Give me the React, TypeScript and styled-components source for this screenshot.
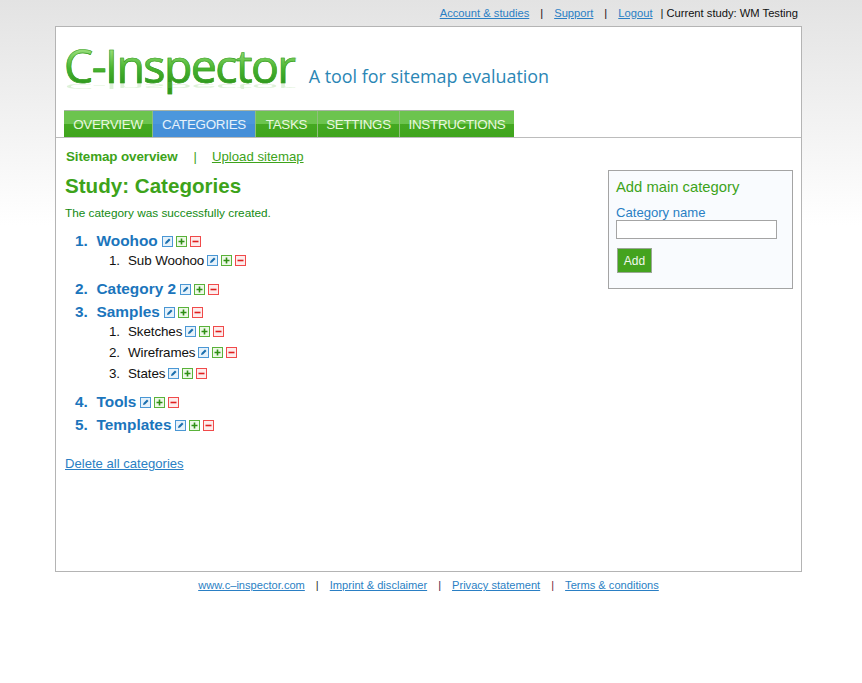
import React from "react";
import styled, { createGlobalStyle } from "styled-components";

const Global = createGlobalStyle`
  html, body { margin: 0; padding: 0; background: #fff; }
  body {
    min-height: 683px;
    font-family: "Liberation Sans", Arial, sans-serif;
    background: linear-gradient(#e3e3e3 0, #ffffff 225px) no-repeat;
  }
`;

const Page = styled.div`
  width: 862px;
  height: 683px;
  box-sizing: border-box;
  padding-left: 55px;
  overflow: hidden;
  display: flex;
  flex-direction: column;
  align-items: flex-start;
`;

const TopBar = styled.div`
  width: 747px;
  height: 26px;
  box-sizing: border-box;
  padding: 6px 4px 0 0;
  display: flex;
  justify-content: flex-end;
  font-size: 11.2px;
  line-height: 14px;
  color: #111;
`;

const Study = styled.span`
  margin-left: -5px;
  white-space: nowrap;
`;

const Link = styled.a`
  color: #2a7fc4;
  text-decoration: underline;
  white-space: nowrap;
`;

const Sep = styled.span<{ $gap: number; $color?: string }>`
  margin: 0 ${(p) => p.$gap}px;
  color: ${(p) => p.$color || "#111"};
`;

const Frame = styled.div`
  width: 747px;
  height: 546px;
  box-sizing: border-box;
  border: 1px solid #b4b4b4;
  background: #fff;
`;

const Header = styled.div`
  height: 110px;
  border-bottom: 1px solid #bcbcbc;
  padding: 0 0 0 8px;
  display: flex;
  flex-direction: column;
`;

const Brand = styled.div`
  height: 83px;
  display: flex;
  align-items: flex-start;
`;

const Logo = styled.div`
  position: relative;
  font-family: "Open Sans", sans-serif;
  font-size: 46.5px;
  line-height: 64px;
  margin-top: 6px;
  letter-spacing: -1.6px;
  background: linear-gradient(#a2e484 22%, #48b52f 55%, #2f9a1e 78%);
  -webkit-background-clip: text;
  background-clip: text;
  color: transparent;
  -webkit-text-stroke: 0.6px #3c9f27;
  white-space: nowrap;

  &::after {
    content: "C-Inspector";
    position: absolute;
    left: 0;
    top: 0;
    color: #7fc96a;
    -webkit-text-stroke: 0;
    opacity: 0.25;
    transform-origin: 0 51px;
    transform: scaleY(-0.14);
    filter: blur(0.6px);
  }
`;

const Tagline = styled.div`
  font-family: "Open Sans", sans-serif;
  font-size: 17.9px;
  line-height: 26px;
  margin: 36px 0 0 14px;
  color: #2a86b5;
  white-space: nowrap;
`;

const Nav = styled.nav`
  display: flex;
  align-self: flex-start;
  height: 26px;
  border-top: 1px solid #a9b4a4;
`;

const Tab = styled.div<{ $w: number; $active?: boolean }>`
  width: ${(p) => p.$w}px;
  box-sizing: border-box;
  display: flex;
  align-items: center;
  justify-content: center;
  font-size: 13.4px;
  letter-spacing: -0.3px;
  color: ${(p) => (p.$active ? "#e6f1fb" : "#e9f7df")};
  border-right: 1px solid #8fbf7c;
  background: ${(p) =>
    p.$active
      ? "linear-gradient(#4c97dc 0, #4c97dc 50%, #458fd8 50%)"
      : "linear-gradient(#6cc44e 0, #6cc44e 50%, #45a921 50%, #3fa41d 100%)"};
  &:last-child { border-right: none; }
`;

const Body = styled.div`
  display: flex;
  justify-content: space-between;
  padding: 0 8px 0 9px;
`;

const Main = styled.div`
  display: flex;
  flex-direction: column;
  align-items: flex-start;
`;

const SubNav = styled.div`
  display: flex;
  align-items: center;
  height: 18px;
  margin-top: 9px;
  font-size: 13.2px;
`;

const Current = styled.strong`
  color: #3da31a;
  font-size: 13.4px;
  letter-spacing: -0.1px;
  margin-left: 1px;
`;

const GreenLink = styled.a`
  color: #3da31a;
  text-decoration: underline;
`;

const Divider = styled.span`
  color: #3da31a;
  font-size: 13px;
  margin: 0 15px 0 16px;
`;

const Title = styled.h1`
  margin: 8px 0 0;
  font-size: 20.6px;
  line-height: 26px;
  font-weight: bold;
  color: #3da31a;
`;

const Notice = styled.p`
  margin: 7px 0 0;
  font-size: 11.8px;
  line-height: 14px;
  color: #128a12;
`;

const Categories = styled.ol`
  list-style: none;
  margin: 12px 0 0;
  padding: 0;
`;

const Category = styled.li<{ $mb: number }>`
  margin-bottom: ${(p) => p.$mb}px;
`;

const CatRow = styled.div`
  display: flex;
  align-items: center;
  height: 18px;
  padding-left: 10px;
  font-size: 15.4px;
  font-weight: bold;
  color: #1b75bc;
`;

const CatNum = styled.span`
  width: 21.5px;
`;

const Subs = styled.ol`
  list-style: none;
  margin: 0;
  padding: 0;
`;

const SubRow = styled.li`
  display: flex;
  align-items: center;
  height: 21px;
  padding-left: 44px;
  font-size: 13.4px;
  letter-spacing: -0.1px;
  color: #111;
`;

const SubNum = styled.span`
  width: 19px;
`;

const Icons = styled.span<{ $gap: number }>`
  display: inline-flex;
  gap: 3px;
  margin-left: ${(p) => p.$gap}px;
  line-height: 0;
`;

const Delete = styled.a`
  margin-top: 22px;
  font-size: 13.1px;
  line-height: 16px;
  color: #2a7fc4;
  text-decoration: underline;
`;

const Side = styled.aside`
  width: 185px;
  height: 119px;
  margin-top: 32px;
  box-sizing: border-box;
  border: 1px solid #a4a4a4;
  background: #f9fbfe;
  padding: 8px 7px;
  display: flex;
  flex-direction: column;
  align-items: flex-start;
`;

const SideTitle = styled.div`
  font-size: 14.8px;
  line-height: 17px;
  color: #3da31a;
`;

const Label = styled.label`
  margin-top: 9px;
  font-size: 13.1px;
  line-height: 15px;
  color: #2a7fc4;
`;

const Input = styled.input`
  width: 161px;
  height: 19px;
  box-sizing: border-box;
  border: 1px solid #a4a4a4;
  background: #fff;
  padding: 0;
  margin: 0;
  display: block;
`;

const AddButton = styled.button`
  width: 35px;
  height: 25px;
  box-sizing: border-box;
  margin: 9px 0 0 1px;
  padding: 0;
  border: 1px solid #9aa895;
  background: #44a31e;
  color: #f2f8ee;
  font-family: "Liberation Sans", Arial, sans-serif;
  font-size: 12px;
`;

const Footer = styled.div`
  display: flex;
  justify-content: center;
  width: 747px;
  margin-top: 6px;
  font-size: 11.1px;
  line-height: 14px;
`;

const EditIcon = () => (
  <svg width="11" height="11" viewBox="0 0 11 11">
    <rect x="0.5" y="0.5" width="10" height="10" fill="#e6f2fb" stroke="#4a97d4" />
    <path d="M3 8l.5-2L7 2.6 8.5 4 5 7.5z" fill="#1b6fae" />
  </svg>
);

const PlusIcon = () => (
  <svg width="11" height="11" viewBox="0 0 11 11">
    <rect x="0.5" y="0.5" width="10" height="10" fill="#eef8e8" stroke="#5ab23a" />
    <path d="M5.5 2.5v6M2.5 5.5h6" stroke="#2f8f14" strokeWidth="1.6" />
  </svg>
);

const MinusIcon = () => (
  <svg width="11" height="11" viewBox="0 0 11 11">
    <rect x="0.5" y="0.5" width="10" height="10" fill="#fdecec" stroke="#f04a4a" />
    <path d="M2.5 5.5h6" stroke="#e01f1f" strokeWidth="1.6" />
  </svg>
);

const Actions = ({ gap }: { gap: number }) => (
  <Icons $gap={gap}>
    <EditIcon />
    <PlusIcon />
    <MinusIcon />
  </Icons>
);

const tabs = [
  { label: "OVERVIEW", w: 89 },
  { label: "CATEGORIES", w: 103, active: true },
  { label: "TASKS", w: 62 },
  { label: "SETTINGS", w: 82 },
  { label: "INSTRUCTIONS", w: 114 },
];

const data: { name: string; mb: number; subs?: string[] }[] = [
  { name: "Woohoo", mb: 9, subs: ["Sub Woohoo"] },
  { name: "Category 2", mb: 5 },
  { name: "Samples", mb: 9, subs: ["Sketches", "Wireframes", "States"] },
  { name: "Tools", mb: 5 },
  { name: "Templates", mb: 0 },
];

export default function App() {
  return (
    <>
      <Global />
      <Page>
        <TopBar>
          <Link>Account &amp; studies</Link>
          <Sep $gap={11}>|</Sep>
          <Link>Support</Link>
          <Sep $gap={11}>|</Sep>
          <Link>Logout</Link>
          <Sep $gap={8}>|</Sep>
          <Study>Current study: WM Testing</Study>
        </TopBar>
        <Frame>
          <Header>
            <Brand>
              <Logo>C-Inspector</Logo>
              <Tagline>A tool for sitemap evaluation</Tagline>
            </Brand>
            <Nav>
              {tabs.map((t) => (
                <Tab key={t.label} $w={t.w} $active={t.active}>
                  {t.label}
                </Tab>
              ))}
            </Nav>
          </Header>
          <Body>
            <Main>
              <SubNav>
                <Current>Sitemap overview</Current>
                <Divider>|</Divider>
                <GreenLink>Upload sitemap</GreenLink>
              </SubNav>
              <Title>Study: Categories</Title>
              <Notice>The category was successfully created.</Notice>
              <Categories>
                {data.map((c, i) => (
                  <Category key={c.name} $mb={c.mb}>
                    <CatRow>
                      <CatNum>{i + 1}.</CatNum>
                      {c.name}
                      <Actions gap={4} />
                    </CatRow>
                    {c.subs && (
                      <Subs>
                        {c.subs.map((s, j) => (
                          <SubRow key={s}>
                            <SubNum>{j + 1}.</SubNum>
                            {s}
                            <Actions gap={3} />
                          </SubRow>
                        ))}
                      </Subs>
                    )}
                  </Category>
                ))}
              </Categories>
              <Delete>Delete all categories</Delete>
            </Main>
            <Side>
              <SideTitle>Add main category</SideTitle>
              <Label>Category name</Label>
              <Input />
              <AddButton>Add</AddButton>
            </Side>
          </Body>
        </Frame>
        <Footer>
          <Link>www.c–inspector.com</Link>
          <Sep $gap={11} $color="#333">|</Sep>
          <Link>Imprint &amp; disclaimer</Link>
          <Sep $gap={11} $color="#3a2a4a">|</Sep>
          <Link>Privacy statement</Link>
          <Sep $gap={11} $color="#7a1f3d">|</Sep>
          <Link>Terms &amp; conditions</Link>
        </Footer>
      </Page>
    </>
  );
}
